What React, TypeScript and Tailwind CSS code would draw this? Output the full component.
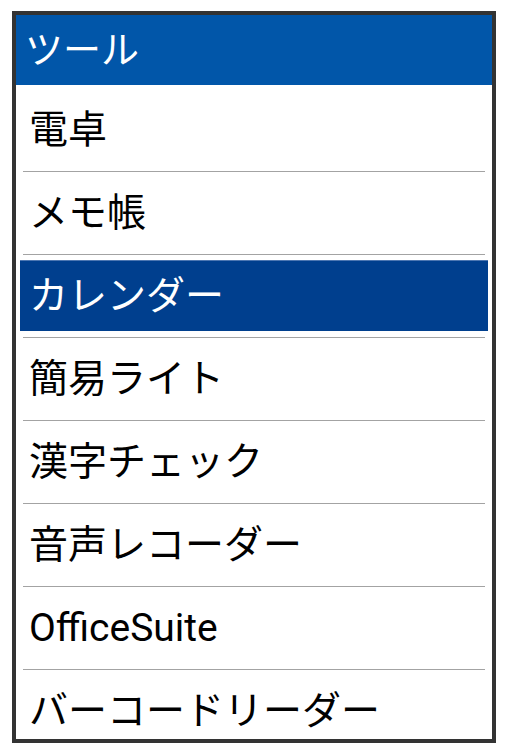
import React from "react";

const items = [
  "電卓",
  "メモ帳",
  "カレンダー",
  "簡易ライト",
  "漢字チェック",
  "音声レコーダー",
  "OfficeSuite",
  "バーコードリーダー",
];

const jp = { fontFamily: 'Roboto, "Noto Sans CJK JP", sans-serif' };

export default function App() {
  return (
    <div className="w-[507px] h-[753px] bg-white pl-[12px] pt-[11px]" style={jp}>
      <div className="w-[484px] h-[732px] border-[4px] border-[#333333] bg-white overflow-hidden flex flex-col">
        <div className="h-[70px] shrink-0 bg-[#0156a9] flex items-center pl-[9px]">
          <span className="text-white text-[38px] leading-none">ツール</span>
        </div>
        <div className="flex flex-col px-[4px] pt-[4px]">
          {items.map((it, i) => {
            const selected = i === 2;
            return (
              <div key={it} className="flex flex-col shrink-0">
                {i > 0 && <div className="h-[1px] mx-[3px] bg-[#a3a3a3]" />}
                <div className="h-[82px] flex flex-col justify-center">
                  {selected ? (
                    <div className="h-[71px] mt-[5px] mb-[6px] bg-[#003f8e] border-t border-[#4d77b2] flex items-center pl-[9px]">
                      <span className="text-white text-[39px] leading-none">{it}</span>
                    </div>
                  ) : (
                    <div className="flex items-center pl-[9px]">
                      <span className="text-black text-[39px] leading-none">{it}</span>
                    </div>
                  )}
                </div>
              </div>
            );
          })}
        </div>
      </div>
    </div>
  );
}
